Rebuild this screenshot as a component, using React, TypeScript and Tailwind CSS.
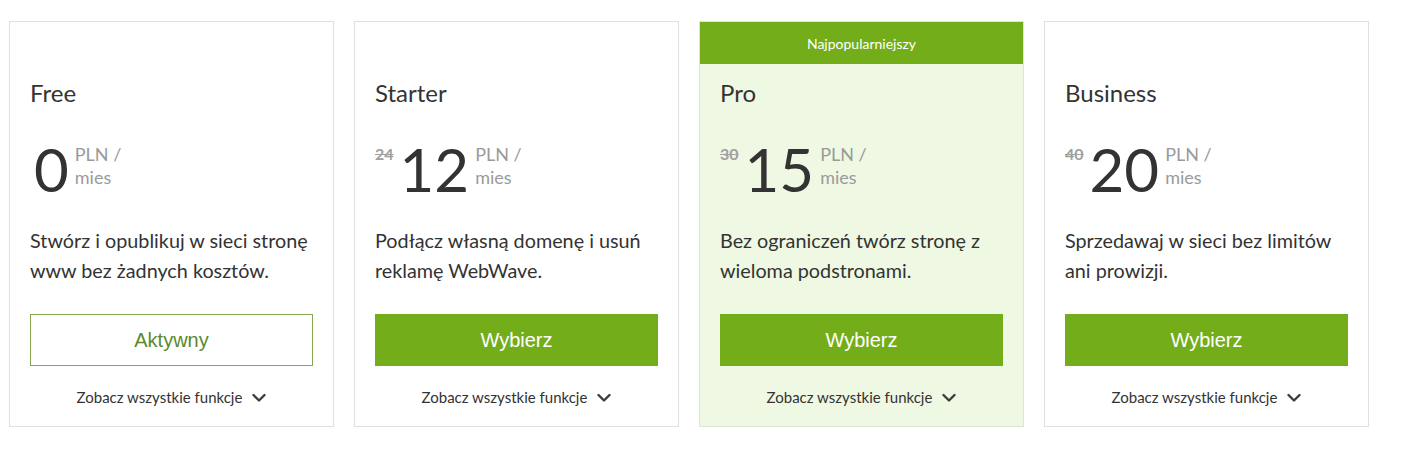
import React from "react";

type Plan = {
  name: string;
  old?: string;
  price: string;
  desc: string[];
  active?: boolean;
  popular?: boolean;
};

const plans: Plan[] = [
  { name: "Free", price: "0", desc: ["Stwórz i opublikuj w sieci stronę", "www bez żadnych kosztów."], active: true },
  { name: "Starter", old: "24", price: "12", desc: ["Podłącz własną domenę i usuń", "reklamę WebWave."] },
  { name: "Pro", old: "30", price: "15", desc: ["Bez ograniczeń twórz stronę z", "wieloma podstronami."], popular: true },
  { name: "Business", old: "40", price: "20", desc: ["Sprzedawaj w sieci bez limitów", "ani prowizji."] },
];

function Chevron() {
  return (
    <svg width="14" height="10" viewBox="0 0 14 10" className="ml-[10px] mt-[1px]">
      <polyline points="1.5,2 7,7.5 12.5,2" fill="none" stroke="#3d3d3d" strokeWidth="2.4" strokeLinecap="round" strokeLinejoin="round" />
    </svg>
  );
}

function Card({ p }: { p: Plan }) {
  return (
    <div
      className={`w-[325px] h-[406px] flex flex-col border ${
        p.popular ? "bg-[#eff8e2] border-[#dde6d2]" : "bg-white border-[#e0e0e0]"
      }`}
    >
      <div className="h-[42px] flex items-center justify-center">
        {p.popular && (
          <div className="w-full h-full bg-[#74ad1a] text-white text-[14px] flex items-center justify-center">
            Najpopularniejszy
          </div>
        )}
      </div>
      <div className="px-[20px] flex flex-col">
        <div className="mt-[13px] text-[24px] leading-[32px] text-[#333]">{p.name}</div>
        <div className="mt-[30px] flex items-start h-[60px]">
          {p.old ? (
            <span className="text-[16px] leading-[20px] text-[#a0a0a0] line-through mt-[5px] mr-[6px] font-bold">{p.old}</span>
          ) : (
            <span className="w-[4px]" />
          )}
          <span className="text-[60px] leading-[60px] text-[#333]">{p.price}</span>
          <div className="ml-[6px] mt-[4px] flex flex-col text-[18px] leading-[23px] text-[#9a9a9a]">
            <span>PLN /</span>
            <span>mies</span>
          </div>
        </div>
        <div className="mt-[26px] text-[19.8px] leading-[30px] text-[#333]">
          {p.desc.map((d) => (
            <div key={d}>{d}</div>
          ))}
        </div>
        {p.active ? (
          <div className="mt-[29px] h-[52px] border border-[#86a84e] flex items-center justify-center text-[20px] text-[#5b8a2b] font-['Liberation_Sans',Arial,sans-serif]">
            Aktywny
          </div>
        ) : (
          <div className="mt-[29px] h-[52px] bg-[#74ad1a] flex items-center justify-center text-[20px] text-white font-['Liberation_Sans',Arial,sans-serif]">
            Wybierz
          </div>
        )}
        <div className="mt-[21px] flex items-center justify-center text-[15px] leading-[20px] text-[#333]">
          <span>Zobacz wszystkie funkcje</span>
          <Chevron />
        </div>
      </div>
    </div>
  );
}

export default function App() {
  return (
    <div className="w-[1407px] h-[460px] bg-white font-['Lato',sans-serif]">
      <div className="pl-[9px] pt-[21px] flex gap-[20px]">
        {plans.map((p) => (
          <Card key={p.name} p={p} />
        ))}
      </div>
    </div>
  );
}
